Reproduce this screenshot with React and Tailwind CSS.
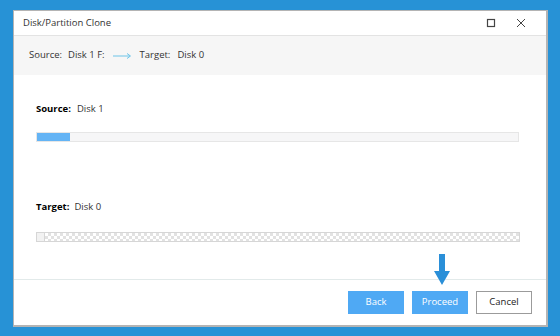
import React from 'react'

function Checker() {
  return (
    <div
      className="h-full flex-1"
      style={{
        backgroundColor: '#ffffff',
        backgroundImage:
          'linear-gradient(45deg, #e2e2e2 25%, transparent 25%, transparent 75%, #e2e2e2 75%), linear-gradient(45deg, #e2e2e2 25%, transparent 25%, transparent 75%, #e2e2e2 75%)',
        backgroundSize: '6px 6px',
        backgroundPosition: '0 0, 3px 3px',
      }}
    />
  )
}

export default function App() {
  return (
    <div className="w-[560px] h-[336px] bg-[#2792d6] pl-[13px] pt-[10px] font-['Open_Sans',sans-serif] text-[#333] overflow-hidden">
      <div className="w-[535px] h-[317px] bg-white border border-[#b4b4b4] border-r-2 border-b-2 flex flex-col">
        {/* title bar */}
        <div className="h-[25px] flex items-center pl-[9px] border-b border-[#e3e3e3] shrink-0">
          <span className="text-[9.5px] text-[#333]">Disk/Partition Clone</span>
          <div className="ml-auto flex items-center">
            <svg width="10" height="10" viewBox="0 0 10 10" className="mr-[20px]">
              <rect x="1.5" y="1.5" width="7" height="7" fill="none" stroke="#444" strokeWidth="1.2" />
            </svg>
            <svg width="10" height="10" viewBox="0 0 10 10" className="mr-[20px]">
              <path d="M1 1L9 9M9 1L1 9" stroke="#444" strokeWidth="1" />
            </svg>
          </div>
        </div>

        {/* info bar */}
        <div className="h-[39px] bg-[#f6f6f6] flex items-center pl-[15px] text-[9.5px] text-[#333] shrink-0">
          <span>Source:</span>
          <span className="ml-[6px]">Disk 1 F:</span>
          <svg width="18" height="6" viewBox="0 0 18 6" className="ml-[8px]">
            <path d="M0 3H17M14 0.5L17.5 3L14 5.5" fill="none" stroke="#6cc4e8" strokeWidth="1" />
          </svg>
          <span className="ml-[9px]">Target:</span>
          <span className="ml-[7px]">Disk 0</span>
        </div>

        {/* body */}
        <div className="flex-1 flex flex-col px-[22px]">
          <div className="mt-[27px] flex items-center text-[9.5px]">
            <span className="font-bold text-black">Source:</span>
            <span className="ml-[6px]">Disk 1</span>
          </div>
          <div className="mt-[16px] h-[10px] w-[483px] border border-[#e6e6e6] bg-[#f6f6f7] flex">
            <div className="w-[33px] h-full bg-[#64b4f5]" />
          </div>

          <div className="mt-[58px] flex items-center text-[9.5px]">
            <span className="font-bold text-black">Target:</span>
            <span className="ml-[5px]">Disk 0</span>
          </div>
          <div className="mt-[17px] h-[10px] w-[484px] border border-[#d6d6d6] flex">
            <div className="w-[8px] h-full bg-[#f2f2f2] border-r border-[#d6d6d6]" />
            <Checker />
          </div>
        </div>

        {/* footer */}
        <div className="relative h-[46px] border-t border-[#e2eaea] flex items-center justify-end pr-[14px] gap-[8px] shrink-0">
          <svg
            width="18"
            height="32"
            viewBox="0 0 18 32"
            className="absolute left-[419px] top-[-26px]"
          >
            <path d="M6 0H12V17H17L9 31L1 17H6Z" fill="#2a8fd8" />
          </svg>
          <button className="w-[56px] h-[23px] bg-[#4fa9f4] text-white text-[9.5px]">Back</button>
          <button className="w-[56px] h-[23px] bg-[#4fa9f4] text-white text-[9.5px]">Proceed</button>
          <button className="w-[56px] h-[23px] bg-white border border-[#9b9b9b] text-[#222] text-[9.5px]">Cancel</button>
        </div>
      </div>
    </div>
  )
}
